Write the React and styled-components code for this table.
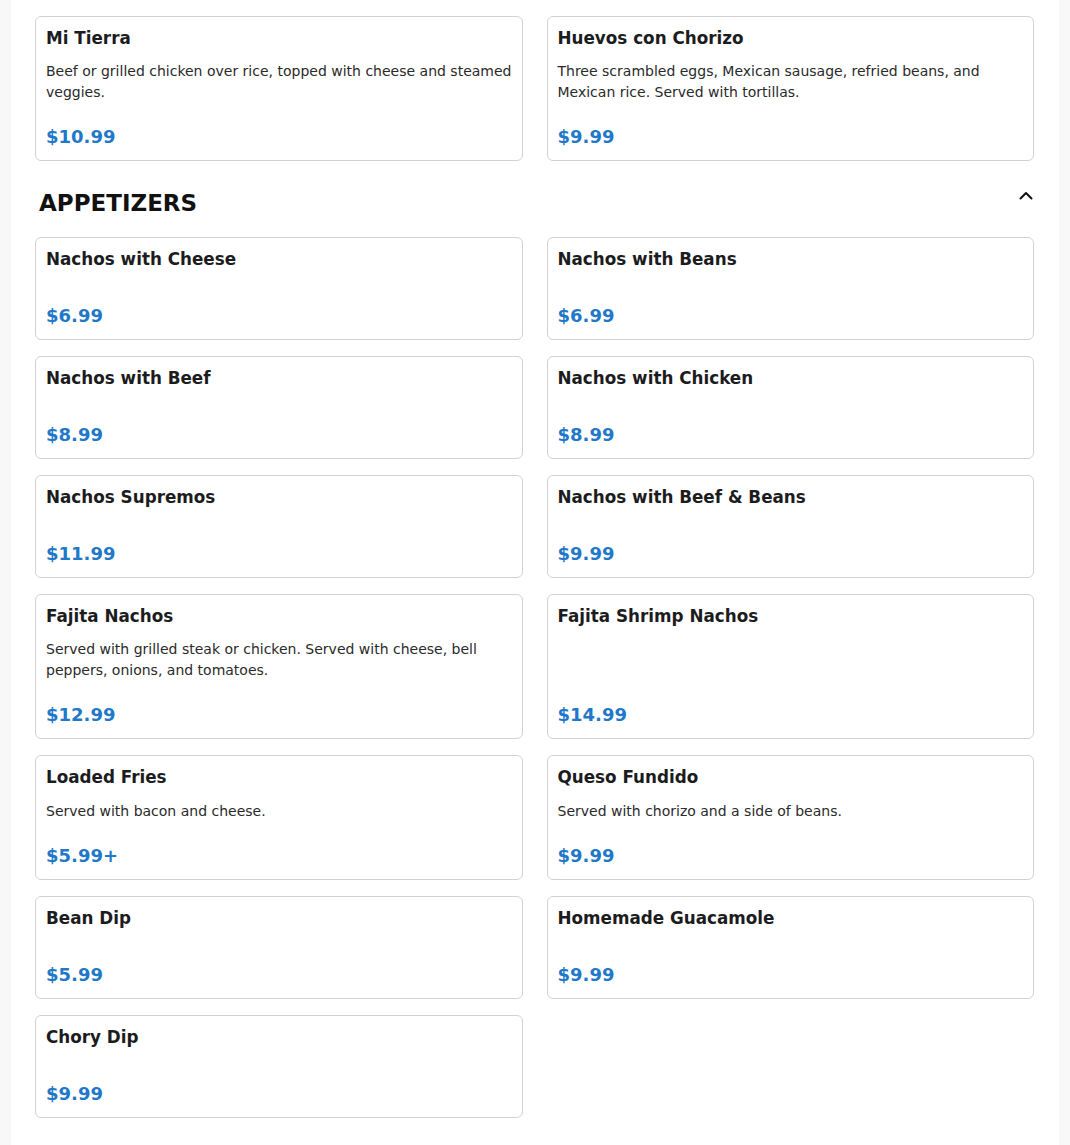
import React from 'react';
import styled, {createGlobalStyle} from 'styled-components';

const GlobalStyle = createGlobalStyle`
    html, body {
        margin: 0;
        padding: 0;
        background: #f8f8f8;
        font-family: "DejaVu Sans", Verdana, sans-serif;
        color: #1c1c1e;
    }
`;

const Page = styled.div`
    height: 1145px;
    overflow: hidden;
    padding: 0 11px;
`;

const Sheet = styled.main`
    background: #fff;
    padding: 0 25px 60px 24px;
`;

// the page is scrolled: the previous category's last row peeks in at the top
const Scrolled = styled.div`
    margin-top: -103.2px;
`;

const Grid = styled.div`
    display: grid;
    grid-template-columns: 1fr 1fr;
    column-gap: 24px;
    row-gap: 16px;
`;

const Card = styled.div`
    border: 1px solid #d2d2d2;
    border-radius: 6px;
    padding: 11px 10px 10px;
    display: flex;
    flex-direction: column;
    background: #fff;
`;

const Title = styled.h3`
    margin: 0;
    font-size: 16.8px;
    line-height: 20px;
    font-weight: 700;
    color: #1c1c1e;
`;

const Desc = styled.p`
    margin: 13.2px 0 20px;
    font-size: 14px;
    line-height: 21px;
    color: #2a2a2a;
`;

const Price = styled.div`
    margin-top: auto;
    font-size: 18px;
    line-height: 27px;
    font-weight: 700;
    color: #1f78c8;
`;

const SectionHead = styled.div`
    display: flex;
    justify-content: space-between;
    align-items: flex-start;
    padding: 29px 0 20.5px 4px;
`;

const SectionTitle = styled.h2`
    margin: 0;
    font-size: 23px;
    line-height: 26px;
    font-weight: 700;
    color: #111;
`;

const Toggle = styled.button`
    border: none;
    background: none;
    padding: 0;
    margin-right: -2px;
    width: 20px;
    height: 11px;
    display: flex;
    align-items: center;
    justify-content: center;
    cursor: pointer;
`;

const ItemCard = ({item}) => (
    <Card>
        <Title>{item.name}</Title>
        <Desc>{item.desc}</Desc>
        <Price>{item.price}</Price>
    </Card>
);

const previous = [
    {name: 'Chile Colorado', desc: '', price: '$11.99'},
    {name: 'Chile Verde', desc: '', price: '$11.99'},
    {name: 'Mi Tierra', desc: 'Beef or grilled chicken over rice, topped with cheese and steamed veggies.', price: '$10.99'},
    {name: 'Huevos con Chorizo', desc: 'Three scrambled eggs, Mexican sausage, refried beans, and Mexican rice. Served with tortillas.', price: '$9.99'},
];

const appetizers = [
    {name: 'Nachos with Cheese', desc: '', price: '$6.99'},
    {name: 'Nachos with Beans', desc: '', price: '$6.99'},
    {name: 'Nachos with Beef', desc: '', price: '$8.99'},
    {name: 'Nachos with Chicken', desc: '', price: '$8.99'},
    {name: 'Nachos Supremos', desc: '', price: '$11.99'},
    {name: 'Nachos with Beef & Beans', desc: '', price: '$9.99'},
    {name: 'Fajita Nachos', desc: 'Served with grilled steak or chicken. Served with cheese, bell peppers, onions, and tomatoes.', price: '$12.99'},
    {name: 'Fajita Shrimp Nachos', desc: '', price: '$14.99'},
    {name: 'Loaded Fries', desc: 'Served with bacon and cheese.', price: '$5.99+'},
    {name: 'Queso Fundido', desc: 'Served with chorizo and a side of beans.', price: '$9.99'},
    {name: 'Bean Dip', desc: '', price: '$5.99'},
    {name: 'Homemade Guacamole', desc: '', price: '$9.99'},
    {name: 'Chory Dip', desc: '', price: '$9.99'},
];

const App = () => {
    return <Page>
        <GlobalStyle/>
        <Sheet>
            <Scrolled>
                <Grid>
                    {previous.map((item) => <ItemCard key={item.name} item={item}/>)}
                </Grid>

                <SectionHead>
                    <SectionTitle>APPETIZERS</SectionTitle>
                    <Toggle aria-label="Collapse">
                        <svg width="14" height="9" viewBox="0 0 14 9" fill="none">
                            <path d="M1.5 7.5 L7 2 L12.5 7.5" stroke="#111" strokeWidth="2" strokeLinecap="round" strokeLinejoin="round"/>
                        </svg>
                    </Toggle>
                </SectionHead>

                <Grid>
                    {appetizers.map((item) => <ItemCard key={item.name} item={item}/>)}
                </Grid>
            </Scrolled>
        </Sheet>
    </Page>
}

export default App;
